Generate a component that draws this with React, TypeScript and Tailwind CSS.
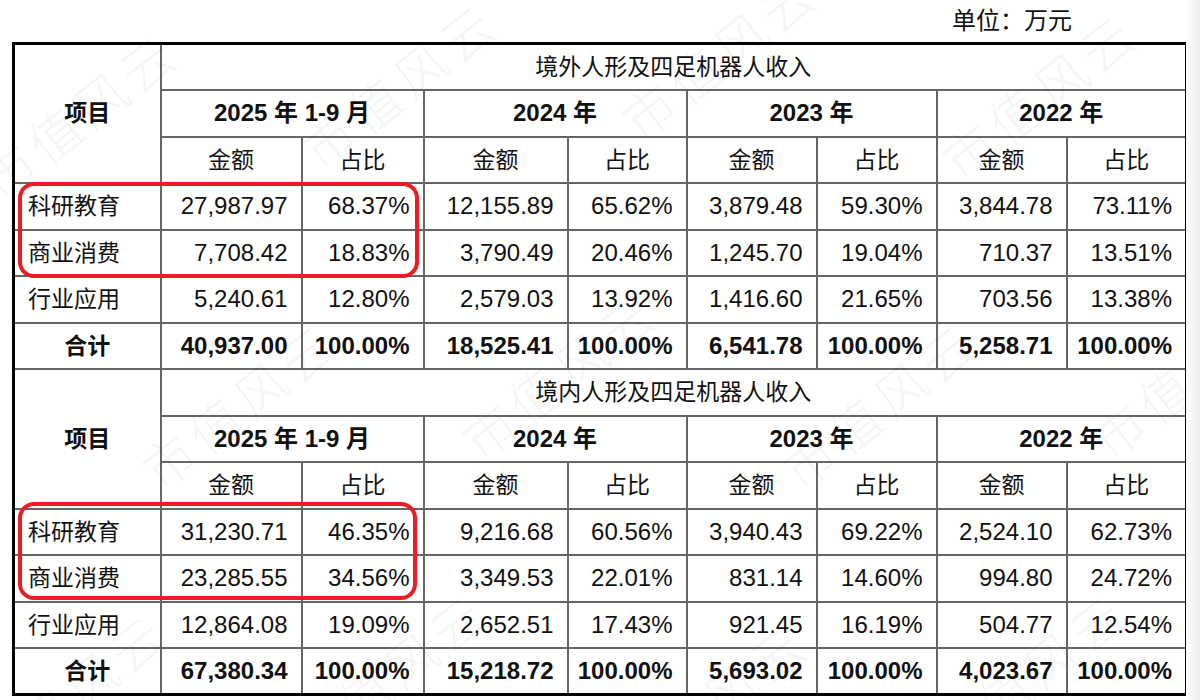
import React from "react";

type Row = { name: string; vals: string[]; total?: boolean };

const sections: { title: string; rows: Row[] }[] = [
  {
    title: "境外人形及四足机器人收入",
    rows: [
      { name: "科研教育", vals: ["27,987.97", "68.37%", "12,155.89", "65.62%", "3,879.48", "59.30%", "3,844.78", "73.11%"] },
      { name: "商业消费", vals: ["7,708.42", "18.83%", "3,790.49", "20.46%", "1,245.70", "19.04%", "710.37", "13.51%"] },
      { name: "行业应用", vals: ["5,240.61", "12.80%", "2,579.03", "13.92%", "1,416.60", "21.65%", "703.56", "13.38%"] },
      { name: "合计", vals: ["40,937.00", "100.00%", "18,525.41", "100.00%", "6,541.78", "100.00%", "5,258.71", "100.00%"], total: true },
    ],
  },
  {
    title: "境内人形及四足机器人收入",
    rows: [
      { name: "科研教育", vals: ["31,230.71", "46.35%", "9,216.68", "60.56%", "3,940.43", "69.22%", "2,524.10", "62.73%"] },
      { name: "商业消费", vals: ["23,285.55", "34.56%", "3,349.53", "22.01%", "831.14", "14.60%", "994.80", "24.72%"] },
      { name: "行业应用", vals: ["12,864.08", "19.09%", "2,652.51", "17.43%", "921.45", "16.19%", "504.77", "12.54%"] },
      { name: "合计", vals: ["67,380.34", "100.00%", "15,218.72", "100.00%", "5,693.02", "100.00%", "4,023.67", "100.00%"], total: true },
    ],
  },
];

const years = ["2025 年 1-9 月", "2024 年", "2023 年", "2022 年"];
const colWidths = [147, 141, 122, 144, 119, 130, 120, 130, 120];

const cell = "border-2 border-[#666] h-[46.5px] p-0";
const cn = "text-[23px]";
const num = "text-[24px] text-right pr-[13px]";

// faint diagonal watermark positions
const marks = [
  [-10, 40], [310, 10], [630, -20], [950, 20],
  [150, 330], [470, 300], [790, 330], [1100, 300],
  [-20, 620], [300, 600], [620, 630], [940, 600],
];

export default function App() {
  return (
    <div
      className="relative w-[1200px] h-[700px] bg-white overflow-hidden text-[#111]"
      style={{ fontFamily: '"Liberation Sans", Arial, "Noto Sans CJK SC", sans-serif' }}
    >
      <div className="h-[42px] flex items-center justify-end pr-[128px] text-[24px] leading-none">单位：万元</div>

      <table className="ml-[12px] w-[1173px] table-fixed border-collapse border-[3px] border-black">
        <colgroup>
          {colWidths.map((w, i) => (
            <col key={i} style={{ width: w }} />
          ))}
        </colgroup>
        {sections.map((s, si) => (
          <tbody key={si}>
            <tr>
              <td rowSpan={3} className={`${cell} ${cn} font-bold text-center`}>项目</td>
              <td colSpan={8} className={`${cell} ${cn} text-center`}>{s.title}</td>
            </tr>
            <tr>
              {years.map((y) => (
                <td key={y} colSpan={2} className={`${cell} text-[24px] font-bold text-center`}>{y}</td>
              ))}
            </tr>
            <tr>
              {years.map((y) => (
                <React.Fragment key={y}>
                  <td className={`${cell} ${cn} text-center`}>金额</td>
                  <td className={`${cell} ${cn} text-center`}>占比</td>
                </React.Fragment>
              ))}
            </tr>
            {s.rows.map((r) => (
              <tr key={r.name}>
                <td className={`${cell} ${cn} ${r.total ? "text-center font-bold" : "text-left pl-[13px]"}`}>{r.name}</td>
                {r.vals.map((v, i) => (
                  <td key={i} className={`${cell} ${num} ${r.total ? "font-bold" : ""}`}>{v}</td>
                ))}
              </tr>
            ))}
          </tbody>
        ))}
      </table>

      {/* red highlight boxes */}
      <div className="absolute left-[18px] top-[182px] w-[401px] h-[96px] border-[4px] border-[#ec1c24] rounded-[16px] pointer-events-none" />
      <div className="absolute left-[18px] top-[502px] w-[399px] h-[98px] border-[4px] border-[#ec1c24] rounded-[16px] pointer-events-none" />

      {marks.map(([x, y], i) => (
        <div
          key={i}
          className="absolute text-[52px] font-light tracking-[6px] text-black/[0.04] pointer-events-none whitespace-nowrap origin-left -rotate-[38deg]"
          style={{ left: x, top: y + 110 }}
        >
          市值风云
        </div>
      ))}

      <div className="absolute right-0 top-0 bottom-0 w-[14px] bg-gradient-to-r from-white to-[#ededed]" />
    </div>
  );
}
